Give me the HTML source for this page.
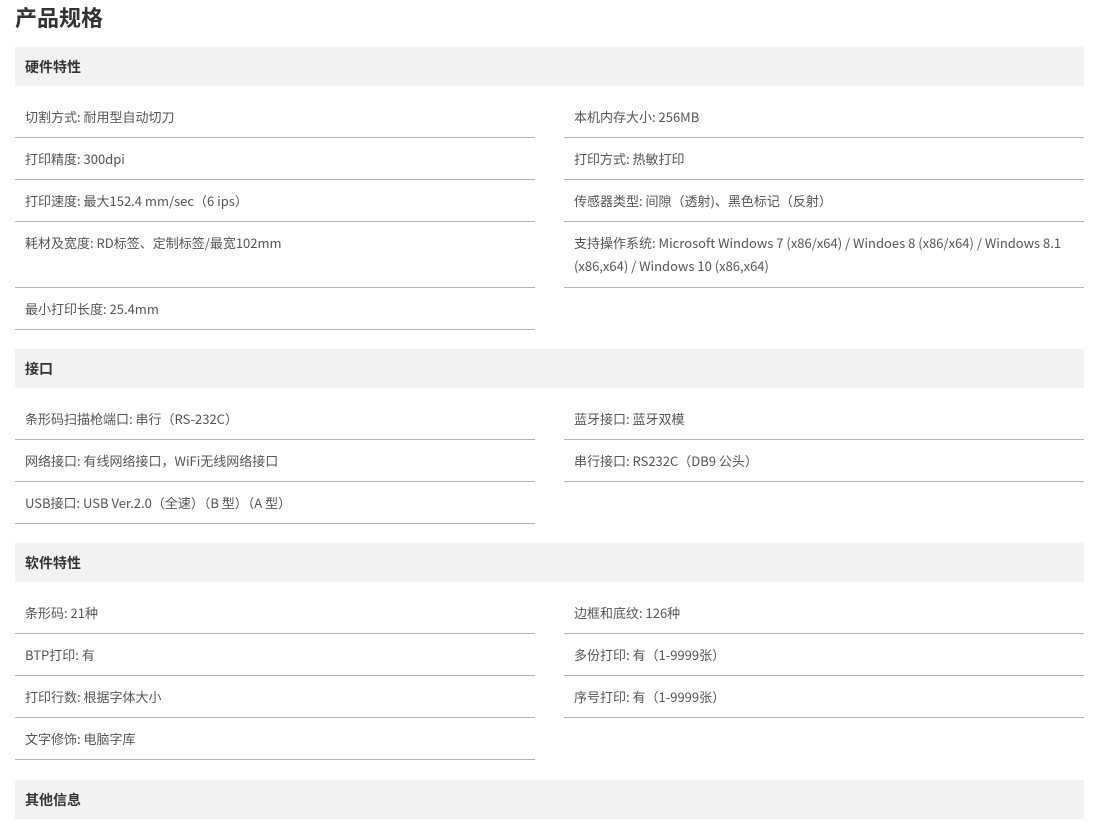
<!DOCTYPE html>
<html><head><meta charset="utf-8">
<style>
*{margin:0;padding:0;box-sizing:border-box}
body{width:1101px;height:827px;background:#fff;overflow:hidden;font-family:"Noto Sans CJK SC","Liberation Sans",sans-serif;color:#555}
h1{position:absolute;left:15px;top:2px;font-size:22px;font-weight:bold;color:#333;line-height:30px}
.sec{position:absolute;left:15px;width:1069px}
.hd{height:39px;background:#f2f2f2;padding-left:10px;font-size:14px;font-weight:bold;color:#333;line-height:40px}
.g{display:grid;grid-template-columns:520px 520px;column-gap:29px;margin-top:10px}
.c{padding:9px 10px;line-height:23px;font-size:13px;border-bottom:1px solid #b3b3b3;white-space:nowrap}
.t{padding-bottom:10px}
.e{border:none}
</style></head><body>
<h1>产品规格</h1>
<div class="sec" style="top:47px">
<div class="hd">硬件特性</div>
<div class="g">
<div class="c">切割方式: 耐用型自动切刀</div><div class="c">本机内存大小: 256MB</div>
<div class="c">打印精度: 300dpi</div><div class="c">打印方式: 热敏打印</div>
<div class="c">打印速度: 最大152.4 mm/sec（6 ips）</div><div class="c">传感器类型: 间隙（透射)、黑色标记（反射）</div>
<div class="c t">耗材及宽度: RD标签、定制标签/最宽102mm</div><div class="c t">支持操作系统: Microsoft Windows 7 (x86/x64) / Windoes 8 (x86/x64) / Windows 8.1<br>(x86,x64) / Windows 10 (x86,x64)</div>
<div class="c">最小打印长度: 25.4mm</div><div class="c e"></div>
</div></div>
<div class="sec" style="top:349px">
<div class="hd">接口</div>
<div class="g">
<div class="c">条形码扫描枪端口: 串行（RS-232C）</div><div class="c">蓝牙接口: 蓝牙双模</div>
<div class="c">网络接口: 有线网络接口，WiFi无线网络接口</div><div class="c">串行接口: RS232C（DB9 公头）</div>
<div class="c">USB接口: USB Ver.2.0（全速）（B 型）（A 型）</div><div class="c e"></div>
</div></div>
<div class="sec" style="top:543px">
<div class="hd">软件特性</div>
<div class="g">
<div class="c">条形码: 21种</div><div class="c">边框和底纹: 126种</div>
<div class="c">BTP打印: 有</div><div class="c">多份打印: 有（1-9999张）</div>
<div class="c">打印行数: 根据字体大小</div><div class="c">序号打印: 有（1-9999张）</div>
<div class="c">文字修饰: 电脑字库</div><div class="c e"></div>
</div></div>
<div class="sec" style="top:780px">
<div class="hd">其他信息</div>
</div>
</body></html>
